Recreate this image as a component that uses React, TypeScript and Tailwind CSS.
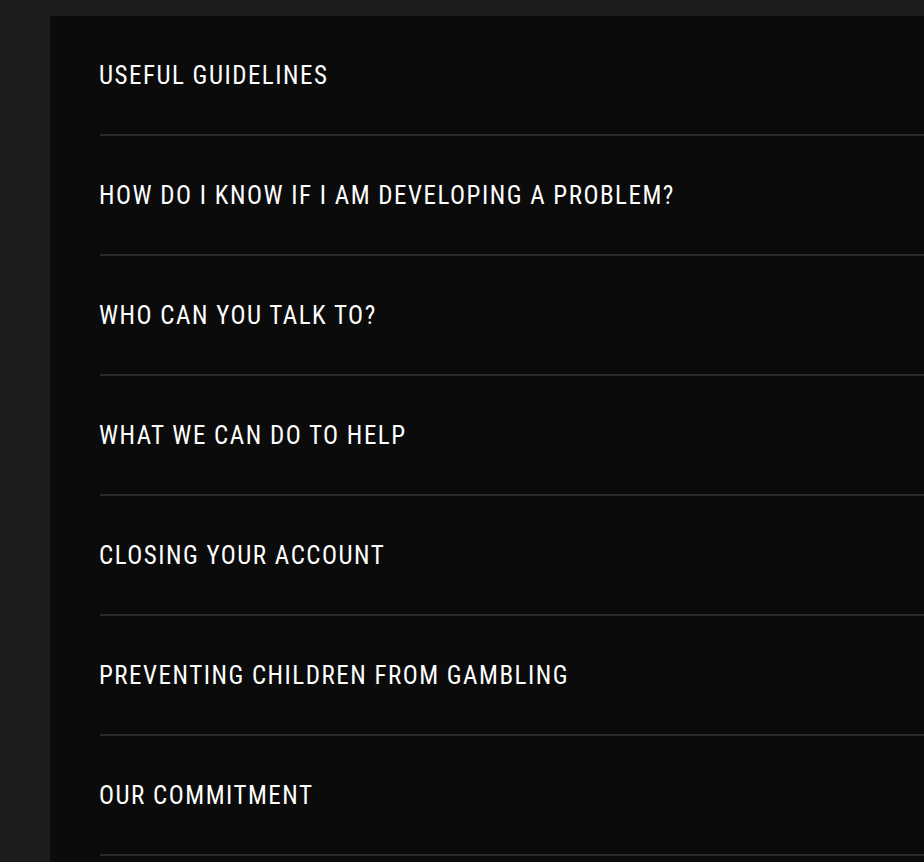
const topics = [
  "Useful guidelines",
  "How do I know if I am developing a problem?",
  "Who can you talk to?",
  "What we can do to help",
  "Closing your account",
  "Preventing children from gambling",
  "Our commitment",
];

function TopicRow({ title }: { title: string }) {
  return (
    <button
      type="button"
      className="flex h-[120px] w-full items-center border-b-2 border-[#2b2b2b] text-left"
    >
      <span className="-ml-px text-[25px] font-normal uppercase leading-none tracking-[1.5px] text-white">
        {title}
      </span>
    </button>
  );
}

export default function App() {
  return (
    <div className="flex min-h-screen flex-col bg-[#1c1c1c] pt-4 pl-[50px] font-['Roboto_Condensed',Roboto,sans-serif]">
      <section className="flex-1 bg-[#0b0b0b] pb-2 pl-[50px]">
        {topics.map((t) => (
          <TopicRow key={t} title={t} />
        ))}
      </section>
    </div>
  );
}
